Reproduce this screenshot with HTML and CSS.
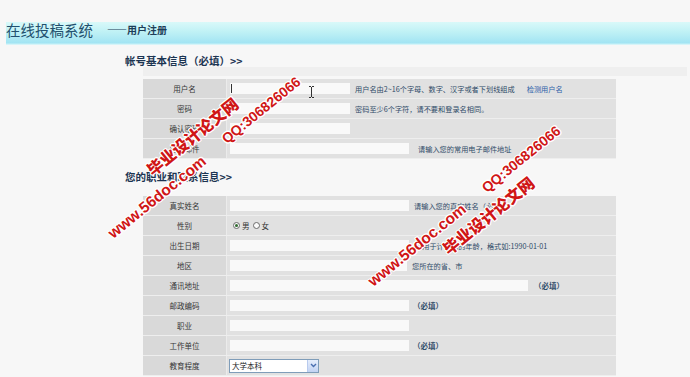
FILE: index.html
```html
<!DOCTYPE html>
<html lang="zh-CN">
<head>
<meta charset="utf-8">
<title>在线投稿系统 - 用户注册</title>
<link rel="stylesheet" href="styles.css">
</head>
<body>
<header class="hdr">
  <span class="title">在线投稿系统</span>
  <span class="sub">——用户注册</span>
</header>

<h2 class="sec sec1">帐号基本信息（必填）&gt;&gt;</h2>
<div class="strip"></div>

<div class="tbl">
  <div class="row">
    <div class="lab">用户名</div>
    <div class="val"><div class="inp w120"><span class="caret"></span></div><span class="hint">用户名由2~16个字母、数字、汉字或者下划线组成</span><a class="link">检测用户名</a></div>
  </div>
  <div class="row">
    <div class="lab">密码</div>
    <div class="val"><div class="inp w120"></div><span class="hint">密码至少6个字符，请不要和登录名相同。</span></div>
  </div>
  <div class="row">
    <div class="lab">确认密码</div>
    <div class="val"><div class="inp w120"></div></div>
  </div>
  <div class="row">
    <div class="lab">电子邮件</div>
    <div class="val"><div class="inp w179"></div><span class="hint hint-far">请输入您的常用电子邮件地址</span></div>
  </div>
</div>

<h2 class="sec sec2">您的职业和联系信息&gt;&gt;</h2>

<div class="tbl">
  <div class="row">
    <div class="lab">真实姓名</div>
    <div class="val"><div class="inp w179"></div><span class="hint">请输入您的真实姓名（必填）</span></div>
  </div>
  <div class="row">
    <div class="lab">性别</div>
    <div class="val"><span class="radio on"></span><span class="rtxt">男</span><span class="radio"></span><span class="rtxt">女</span></div>
  </div>
  <div class="row">
    <div class="lab">出生日期</div>
    <div class="val"><div class="inp w179"></div><span class="hint hint-near">可用于计算您的年龄，格式如:1990-01-01</span></div>
  </div>
  <div class="row">
    <div class="lab">地区</div>
    <div class="val"><div class="inp w177"></div><span class="hint">您所在的省、市</span></div>
  </div>
  <div class="row">
    <div class="lab">通讯地址</div>
    <div class="val"><div class="inp w298"></div><span class="req req-far">（必填）</span></div>
  </div>
  <div class="row">
    <div class="lab">邮政编码</div>
    <div class="val"><div class="inp w179"></div><span class="req">（必填）</span></div>
  </div>
  <div class="row">
    <div class="lab">职业</div>
    <div class="val"><div class="inp w179"></div></div>
  </div>
  <div class="row">
    <div class="lab">工作单位</div>
    <div class="val"><div class="inp w179"></div><span class="req">（必填）</span></div>
  </div>
  <div class="row">
    <div class="lab">教育程度</div>
    <div class="val"><div class="sel"><span class="sel-txt">大学本科</span><span class="sel-btn"><svg width="7" height="5" viewBox="0 0 7 5"><path d="M1 1 L3.5 3.5 L6 1" fill="none" stroke="#4a6fb0" stroke-width="1.4"/></svg></span></div></div>
  </div>
</div>

<svg class="ibeam" width="7" height="12" viewBox="0 0 7 12"><path d="M1 0.5 H3 M4 0.5 H6 M3.5 1 V11 M1 11.5 H3 M4 11.5 H6" fill="none" stroke="#333" stroke-width="1"/></svg>

<div class="wm wm-www1">www.56doc.com</div>
<div class="wm wm-cn wm-cn1">毕业设计论文网</div>
<div class="wm wm-qq wm-qq1">QQ:306826066</div>
<div class="wm wm-www2">www.56doc.com</div>
<div class="wm wm-cn wm-cn2">毕业设计论文网</div>
<div class="wm wm-qq wm-qq2">QQ:306826066</div>
</body>
</html>
```

FILE: styles.css
```css
* { box-sizing: border-box; }

html, body {
  margin: 0;
  padding: 0;
}

body {
  width: 690px;
  height: 377px;
  overflow: hidden;
  position: relative;
  background: #f7f7f7;
  font-family: "Noto Sans CJK SC", "Noto Sans", sans-serif;
}

.hdr {
  margin-left: 6px;
  height: 45px;
  padding-top: 14px;
  display: flex;
  align-items: center;
  background: linear-gradient(to bottom,
    rgba(247,247,247,0) 0, rgba(247,247,247,0) 22px,
    #d9f9f9 22px, #bff1f5 32px, #a2e4f3 43px, #c8f2f8 44px, #e6f6f8 45px);
}

.hdr > span { line-height: 18px; }

.title {
  font-size: 14.5px;
  color: #22506e;
}

.sub {
  margin-left: 14px;
  font-size: 10px;
  font-weight: bold;
  color: #1d3e58;
}

.sec {
  margin: 9px 0 0 125px;
  font-size: 10.5px;
  line-height: 14px;
  font-weight: bold;
  color: #1c3552;
}

.sec2 { margin-top: 11px; }

.strip {
  margin: -1px 3px 0 143px;
  height: 9px;
  background: #efefef;
}

.tbl {
  margin: 3px 0 0 143px;
  width: 473px;
}

.sec2 + .tbl { margin-top: 12px; }

.row {
  display: flex;
  height: 20px;
  border-bottom: 1px solid #eeeeee;
}

.lab {
  width: 84px;
  flex: none;
  background: #d9d9d9;
  border-right: 1px solid #ebebeb;
  display: flex;
  align-items: center;
  justify-content: center;
  font-size: 7.5px;
  color: #363636;
}

.val {
  flex: 1;
  background: #e1e1e1;
  display: flex;
  align-items: center;
  padding-left: 3px;
  white-space: nowrap;
}

.inp {
  height: 11px;
  background: #f9f9f9;
  flex: none;
  display: flex;
  align-items: center;
}

.w120 { width: 120px; }
.w177 { width: 177px; }
.w179 { width: 179px; }
.w298 { width: 298px; }

.caret {
  display: block;
  width: 1px;
  height: 9px;
  margin-left: 1px;
  background: #333;
}

.hint {
  margin-left: 5px;
  font-size: 7.2px;
  color: #2f4b68;
}

.hint-far { margin-left: 9px; }
.hint-near { margin-left: 6px; }

.link {
  margin-left: 12px;
  font-size: 7.2px;
  color: #2f62a8;
}

.req {
  margin-left: 4px;
  font-size: 7.5px;
  font-weight: bold;
  color: #34506c;
}

.req-far { margin-left: 6px; }

.radio {
  width: 7px;
  height: 7px;
  border: 1px solid #6a6a6a;
  border-radius: 50%;
  background: #fafafa;
  margin-left: 3px;
  display: flex;
  align-items: center;
  justify-content: center;
}

.radio + .rtxt + .radio { margin-left: 3px; }

.radio.on::after {
  content: "";
  width: 3px;
  height: 3px;
  border-radius: 50%;
  background: #2f6a2f;
}

.rtxt {
  margin-left: 2px;
  font-size: 7.5px;
  color: #333;
}

.sel {
  margin-left: -1px;
  width: 90px;
  height: 14px;
  border: 1px solid #7f9db9;
  background: #fff;
  display: flex;
  align-items: center;
  justify-content: space-between;
}

.sel-txt {
  margin-left: 2px;
  font-size: 7.5px;
  color: #222;
}

.sel-btn {
  width: 11px;
  height: 12px;
  background: linear-gradient(#e6eefc, #c2d3f3);
  border-left: 1px solid #b9cbee;
  display: flex;
  align-items: center;
  justify-content: center;
}

.ibeam {
  position: absolute;
  left: 308px;
  top: 86px;
}

.wm {
  position: absolute;
  transform: translate(-50%, -50%) rotate(-39deg);
  white-space: nowrap;
  color: #d01616;
  font-weight: bold;
  line-height: 1;
  text-shadow: 1px 0 0 #fff, -1px 0 0 #fff, 0 1px 0 #fff, 0 -1px 0 #fff,
               1px 1px 0 #fff, -1px -1px 0 #fff, 1px -1px 0 #fff, -1px 1px 0 #fff;
  font-family: "Liberation Sans", Arial, sans-serif;
  font-size: 15.5px;
}

.wm-cn {
  font-family: "Noto Sans CJK SC", sans-serif;
  font-size: 16px;
  font-weight: 900;
}

.wm-qq { font-size: 14px; }

.wm-www1 { left: 157px; top: 197px; }
.wm-cn1  { left: 192px; top: 136px; }
.wm-qq1  { left: 261px; top: 110px; }
.wm-www2 { left: 417px; top: 245px; }
.wm-cn2  { left: 488px; top: 215px; }
.wm-qq2  { left: 521px; top: 159px; }
```
